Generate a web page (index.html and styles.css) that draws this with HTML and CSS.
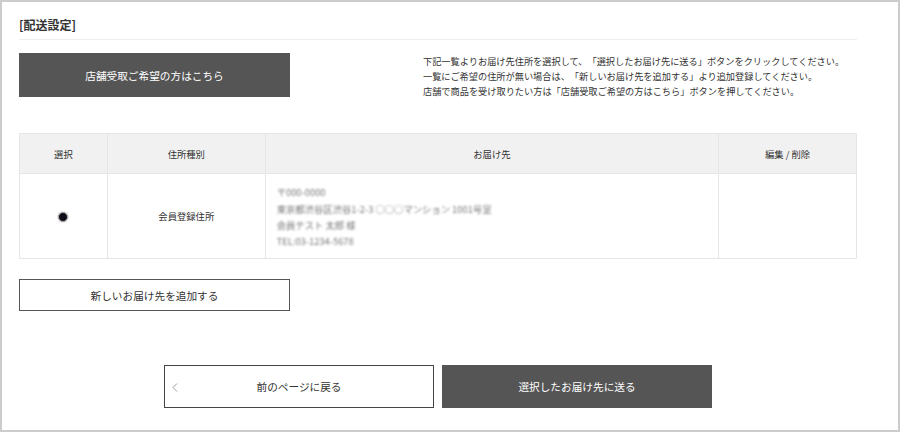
FILE: index.html
```html
<!DOCTYPE html>
<html lang="ja">
<head>
<meta charset="utf-8">
<title>配送設定</title>
<link rel="stylesheet" href="styles.css">
</head>
<body>
<div class="frame">
  <h2 class="title">[配送設定]</h2>
  <div class="top">
    <button class="btn btn-dark btn-store">店舗受取ご希望の方はこちら</button>
    <div class="note">
      <p>下記一覧よりお届け先住所を選択して、「選択したお届け先に送る」ボタンをクリックしてください。</p>
      <p>一覧にご希望の住所が無い場合は、「新しいお届け先を追加する」より追加登録してください。</p>
      <p>店舗で商品を受け取りたい方は「店舗受取ご希望の方はこちら」ボタンを押してください。</p>
    </div>
  </div>
  <table class="addr-table">
    <thead>
      <tr>
        <th class="c-sel">選択</th>
        <th class="c-type">住所種別</th>
        <th class="c-addr">お届け先</th>
        <th class="c-edit">編集 / 削除</th>
      </tr>
    </thead>
    <tbody>
      <tr>
        <td class="c-sel"><input type="radio" class="radio" name="addr" checked></td>
        <td class="c-type">会員登録住所</td>
        <td class="c-addr">
          <div class="blur">
            <p>〒000-0000</p>
            <p>東京都渋谷区渋谷1-2-3 ○○○マンション 1001号室</p>
            <p>会員テスト 太郎 様</p>
            <p>TEL:03-1234-5678</p>
          </div>
        </td>
        <td class="c-edit"></td>
      </tr>
    </tbody>
  </table>
  <button class="btn btn-outline btn-add">新しいお届け先を追加する</button>
  <div class="actions">
    <button class="btn btn-outline btn-back">
      <svg class="chev" width="6" height="9" viewBox="0 0 6 9"><polyline points="5,0.5 1,4.5 5,8.5" fill="none" stroke="#999" stroke-width="1"/></svg>
      前のページに戻る
    </button>
    <button class="btn btn-dark btn-next">選択したお届け先に送る</button>
  </div>
</div>
</body>
</html>
```

FILE: styles.css
```css
* { box-sizing: border-box; }
html, body { margin: 0; padding: 0; background: #fff; }
body {
  font-family: "Noto Sans CJK JP", "Noto Sans", "Liberation Sans", sans-serif;
  color: #333;
  text-spacing-trim: space-all;
}
p { margin: 0; }
.frame {
  width: 900px;
  height: 432px;
  border: 2px solid #cccccc;
  padding: 15px 41px 0 17px;
}
.title {
  margin: 0;
  font-size: 12px;
  font-weight: bold;
  line-height: 16px;
  padding-bottom: 6px;
  border-bottom: 1px solid #eeeeee;
  color: #333;
}
.top {
  margin-top: 13px;
  display: flex;
  justify-content: space-between;
  align-items: flex-start;
}
.btn {
  font-family: inherit;
  font-size: 10.67px;
  cursor: pointer;
  display: flex;
  align-items: center;
  justify-content: center;
  padding: 0;
  border-radius: 0;
}
.btn-dark {
  background: #555555;
  color: #fff;
  border: none;
}
.btn-outline {
  background: #fff;
  color: #333;
  border: 1px solid #555;
}
.btn-store {
  width: 271px;
  height: 44px;
}
.note {
  width: 434px;
  margin-top: 1px;
  font-size: 9.2px;
  line-height: 15px;
  color: #333;
}
.addr-table {
  margin-top: 34px;
  width: 838px;
  border-collapse: collapse;
  font-size: 9.33px;
  border: 1px solid #e6e6e6;
}
.addr-table th, .addr-table td {
  border: 1px solid #e6e6e6;
  padding: 0;
  text-align: center;
  vertical-align: middle;
}
.addr-table th {
  background: #f1f1f1;
  font-weight: normal;
  height: 40px;
}
.addr-table td { height: 85px; }
.c-sel { width: 88px; }
.c-type { width: 158px; }
.c-addr { width: 454px; }
.c-edit { width: 138px; }
.addr-table td.c-addr { text-align: left; padding-left: 11px; padding-top: 2px; }
.blur {
  filter: blur(1.3px);
  color: #777;
  line-height: 16.3px;
  font-size: 9.33px;
}
.radio {
  appearance: none;
  -webkit-appearance: none;
  margin: 0;
  width: 10px;
  height: 10px;
  border-radius: 50%;
  border: 1.5px solid #a8a8a8;
  background: #120c18;
  box-shadow: 0 0 0 1px #e2e2e2;
  vertical-align: middle;
}
.btn-add {
  margin-top: 20px;
  width: 271px;
  height: 32px;
}
.actions {
  margin-top: 54px;
  width: 838px;
  display: flex;
  justify-content: center;
  gap: 8px;
}
.btn-back, .btn-next {
  width: 270px;
  height: 43px;
}
.btn-back {
  position: relative;
  border-color: #444;
}
.chev {
  position: absolute;
  left: 7px;
  top: 17px;
}
```
